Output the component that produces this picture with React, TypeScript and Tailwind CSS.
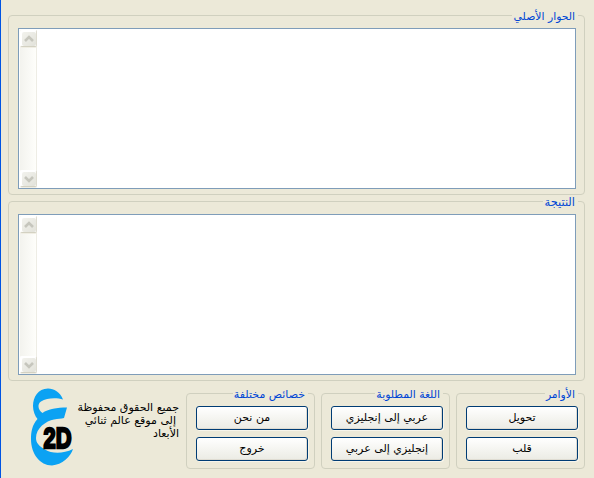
import type { ReactNode } from "react";

function Group({ title, legend, className, children }: { title: string; legend: string; className: string; children: ReactNode }) {
  return (
    <section className={`relative rounded-[4px] border border-[#d0d0bf] ${className}`}>
      <h2 className={`absolute -top-[6px] right-[6px] h-[13px] bg-[#ece9d8] pr-[3px] text-right leading-[13px] whitespace-nowrap text-[#0046d5] ${legend}`}>
        {title}
      </h2>
      {children}
    </section>
  );
}

function ScrollButton({ down = false }: { down?: boolean }) {
  return (
    <div className="flex h-[17px] w-[17px] items-center justify-center rounded-[2px] border border-white border-b-[#d3d1c2] border-r-[#dddbcf] bg-white shadow-[0_1px_0_#f0eee4]">
      <svg width="14" height="14" viewBox="0 0 14 14" className="shrink-0 rounded-[2px] bg-linear-to-br from-[#f2f2ed] to-[#e2e2da]">
        <path d={down ? "M3 5 L7 9 L11 5" : "M3 9 L7 5 L11 9"} fill="none" stroke="#c6c6bd" strokeWidth="2.6" />
      </svg>
    </div>
  );
}

function TextPane() {
  return (
    <div className="flex h-[161px] w-[558px] border border-[#7f9db9] bg-white p-px" dir="ltr">
      <div className="flex w-[17px] flex-col items-end justify-between border-r border-[#eeede5] bg-linear-to-r from-[#f3f3ee] to-[#fefefb]">
        <div className="-mr-px"><ScrollButton /></div>
        <div className="-mr-px"><ScrollButton down /></div>
      </div>
    </div>
  );
}

function Button({ children }: { children: string }) {
  return (
    <button className="flex h-[24px] w-[112px] items-center justify-center rounded-[3px] border border-[#003c74] bg-linear-to-b from-white via-[#f5f5f1] to-[#ebebe4] text-[11px] leading-[14px] whitespace-nowrap text-black shadow-[inset_-1px_-1px_0_#dfdcd2,1px_1px_0_#f7f5eb]">
      {children}
    </button>
  );
}

function Logo() {
  return (
    <svg width="46" height="80" viewBox="29 388 46 80" className="shrink-0 overflow-visible" direction="ltr">
      <path d="M63 399.5 C60 392 54 388.6 48 388.6 C38 389 33 397 33 406 C33 411 35 416 37.5 419 C32 425 31 432 31 439 C31 454 40 465.4 52 465.4 C62 465 71 456 73 449 C63 454 52 454 45 449.5 C39 446 36 443 36 438 C36 428 46 421 54 419.5 C58 418.5 61 419 64 418 L67 407.5 C57 407.5 48 409 42.5 413 C38 410 37 404 41 401.5 C47 397.5 57 397.5 63 399.5 Z" fill="#0ba2f3" />
      <text x="43.5" y="448.2" fontSize="30" fontWeight="700" fontFamily="'Liberation Sans', sans-serif" textLength="28" lengthAdjust="spacingAndGlyphs" fill="black" stroke="black" strokeWidth="2.4">2D</text>
    </svg>
  );
}

export default function App() {
  return (
    <main dir="rtl" className="h-[478px] w-[594px] overflow-hidden border-l border-[#0054e3] bg-[#ece9d8] pt-[15px] pr-[9px] pl-[7px] font-['DejaVu_Sans',sans-serif]">
      <Group title="الحوار الأصلي" legend="w-[66px] text-[10.8px]" className="h-[180px] pt-[12px] pr-[8px]"><TextPane /></Group>
      <Group title="النتيجة" legend="w-[35px] text-[11.4px]" className="mt-[6px] h-[180px] pt-[12px] pr-[8px]"><TextPane /></Group>
      <div className="mt-[12px] flex">
        <div className="flex gap-[6px]">
          <Group title="الأوامر" legend="w-[33px] text-[10.8px]" className="flex h-[76px] w-[129px] flex-col gap-[7px] pt-[12px] pr-[6px]">
            <Button>تحويل</Button><Button>قلب</Button>
          </Group>
          <Group title="اللغة المطلوبة" legend="w-[68px] text-[10.8px]" className="flex h-[76px] w-[129px] flex-col gap-[7px] pt-[12px] pr-[6px]">
            <Button>عربي إلى إنجليزي</Button><Button>إنجليزي إلى عربي</Button>
          </Group>
          <Group title="خصائص مختلفة" legend="w-[75px] text-[11px]" className="flex h-[76px] w-[129px] flex-col gap-[7px] pt-[12px] pr-[6px]">
            <Button>من نحن</Button><Button>خروج</Button>
          </Group>
        </div>
        <p className="mt-[8px] mr-[7px] w-[101px] text-[11px] leading-[13px] whitespace-nowrap text-black">
          <span className="block">جميع الحقوق محفوظة</span>
          <span className="block pr-[3px]">إلى موقع عالم ثنائي</span>
          <span className="block">الأبعاد</span>
        </p>
        <div className="-mt-[5px] mr-[3px]"><Logo /></div>
      </div>
    </main>
  );
}
